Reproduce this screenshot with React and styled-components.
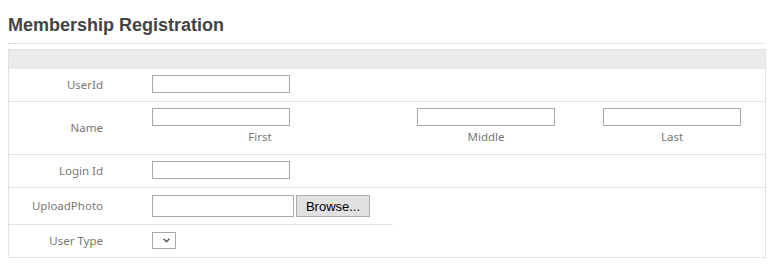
import React from "react";
import styled, { createGlobalStyle } from "styled-components";

const GlobalStyle = createGlobalStyle`
  body {
    margin: 8px;
    background: #fff;
    font-family: "Noto Sans", "Open Sans", sans-serif;
  }
`;

const Page = styled.div`
  width: 758px;
`;

const Title = styled.h2`
  margin: 7px 0 0;
  padding: 0 0 7px;
  font-family: "Liberation Sans", Arial, sans-serif;
  font-size: 18px;
  font-weight: bold;
  color: #444;
  border-bottom: 1px dotted #c8c8c8;
  width: 756px;
`;

const Table = styled.div`
  margin-top: 5px;
  border: 1px solid #e3e3e3;
`;

const HeadBar = styled.div`
  height: 19px;
  background: #ebebeb;
`;

const Row = styled.div`
  display: grid;
  grid-template-columns: 133px 251px 186px 186px;
  border-bottom: ${(p) => (p.$line ? "1px solid #e3e3e3" : "none")};
`;

const Label = styled.div`
  align-self: stretch;
  display: flex;
  align-items: center;
  justify-content: flex-end;
  padding-right: 39px;
  padding-bottom: 1px;
  font-size: 11.5px;
  color: #777;
  border-bottom: ${(p) => (p.$line ? "1px solid #e3e3e3" : "none")};
`;

const Field = styled.div`
  display: flex;
  flex-direction: column;
  align-items: ${(p) => (p.$center ? "center" : "flex-start")};
  padding: ${(p) => p.$pad || "6px 0 8px"};
  padding-left: ${(p) => (p.$center ? "0" : "10px")};
  border-bottom: ${(p) => (p.$line ? "1px solid #e3e3e3" : "none")};
`;

const Inline = styled.div`
  display: flex;
  gap: 2px;
`;

const TextBox = styled.input`
  box-sizing: border-box;
  width: ${(p) => p.$w || 138}px;
  height: ${(p) => p.$h || 18}px;
  margin: 0;
  padding: 0 3px;
  border: 1px solid #a9a9a9;
  background: #fff;
  outline: none;
`;

const Caption = styled.div`
  margin: 3px 0 1px;
  line-height: 16px;
  font-size: 11.5px;
  color: #777;
  align-self: ${(p) => (p.$shift ? "stretch" : "center")};
  text-align: center;
  padding-right: ${(p) => (p.$shift ? "25px" : "0")};
`;

const BrowseButton = styled.button`
  box-sizing: border-box;
  width: 74px;
  height: 22px;
  margin: 0;
  padding: 0;
  border: 1px solid #adadad;
  background: #e1e1e1;
  font-family: "Liberation Sans", Arial, sans-serif;
  font-size: 13px;
  color: #000;
`;

const SelectWrap = styled.div`
  position: relative;
  width: 24px;
  height: 17px;
`;

const Select = styled.select`
  display: block;
  box-sizing: border-box;
  width: 24px;
  height: 17px;
  margin: 0;
  padding: 0;
  border: 1px solid #a9a9a9;
  background: #fff;
  appearance: none;
  outline: none;
`;

const Chevron = styled.svg`
  position: absolute;
  left: 11px;
  top: 6px;
  pointer-events: none;
`;

const App = () => {
  return (
    <Page>
      <GlobalStyle />
      <Title>Membership Registration</Title>
      <Table>
        <HeadBar />
        <Row $line>
          <Label>UserId</Label>
          <Field>
            <TextBox type="text" />
          </Field>
        </Row>
        <Row $line>
          <Label>Name</Label>
          <Field>
            <TextBox type="text" />
            <Caption $shift>First</Caption>
          </Field>
          <Field $center>
            <TextBox type="text" />
            <Caption>Middle</Caption>
          </Field>
          <Field $center>
            <TextBox type="text" />
            <Caption>Last</Caption>
          </Field>
        </Row>
        <Row $line>
          <Label>Login Id</Label>
          <Field>
            <TextBox type="text" />
          </Field>
        </Row>
        <Row>
          <Label $line>UploadPhoto</Label>
          <Field $line $pad="7px 0 7px">
            <Inline>
              <TextBox type="text" readOnly $w={142} $h={22} />
              <BrowseButton type="button">Browse...</BrowseButton>
            </Inline>
          </Field>
        </Row>
        <Row>
          <Label>User Type</Label>
          <Field $pad="7px 0 8px">
            <SelectWrap>
              <Select>
                <option value=""></option>
              </Select>
              <Chevron width="7" height="5" viewBox="0 0 7 5">
                <path d="M0.6 0.8 L3.5 3.7 L6.4 0.8" fill="none" stroke="#555" strokeWidth="1.5" />
              </Chevron>
            </SelectWrap>
          </Field>
        </Row>
      </Table>
    </Page>
  );
};

export default App;
